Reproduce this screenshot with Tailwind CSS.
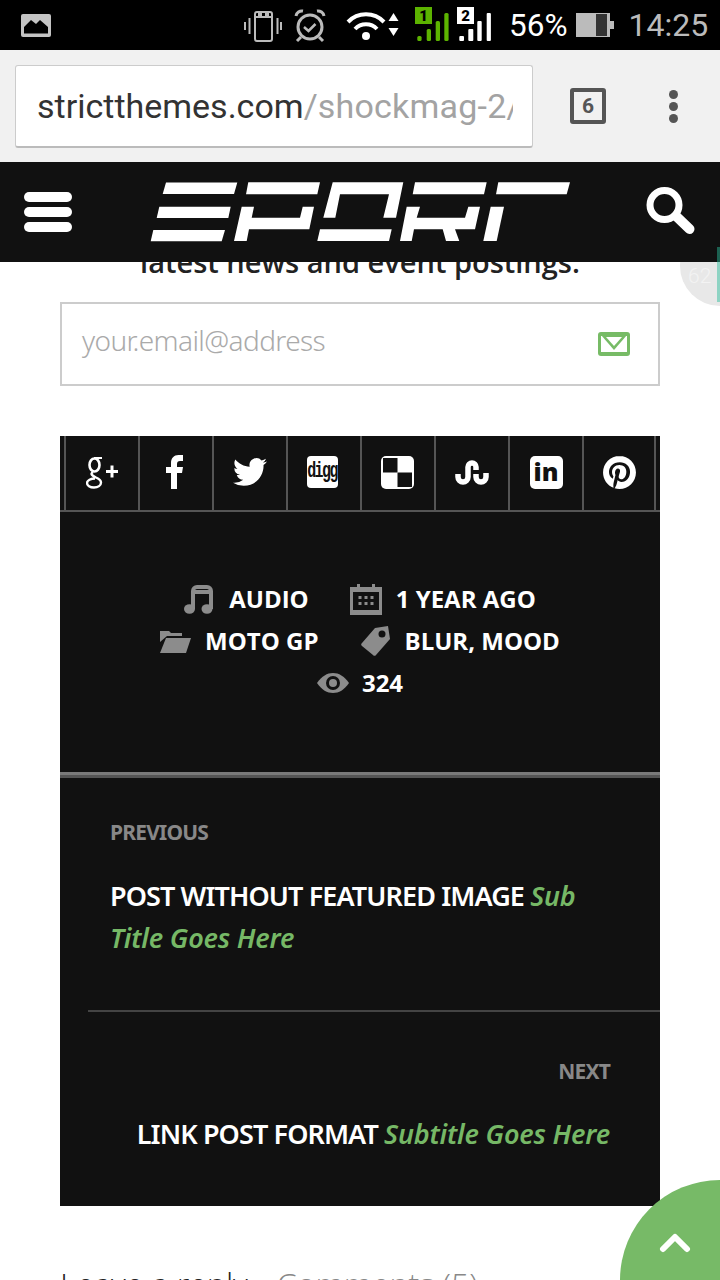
<!DOCTYPE html>
<html>
<head>
<meta charset="utf-8">
<script src="https://cdn.jsdelivr.net/npm/@tailwindcss/browser@4"></script>
</head>
<body>
<div class="relative w-[720px] h-[1280px] overflow-hidden bg-white font-['Roboto',sans-serif]">
  <!-- status bar -->
  <div class="relative flex items-center h-[50px] bg-black">
    <svg class="shrink-0" width="720" height="50" viewBox="0 0 720 50" aria-hidden="true">
      <path d="M23 14h26a2 2 0 0 1 2 2v19a2 2 0 0 1-2 2H23a2 2 0 0 1-2-2V16a2 2 0 0 1 2-2z" fill="#c4c4c4"/>
      <path d="M24 32v-5l7-7 5 4 4-4 8 7v5z" fill="#000"/><rect x="24" y="31" width="24" height="2.5" fill="#000"/>
      <g fill="none" stroke="#bbb" stroke-width="2">
        <rect x="255" y="12" width="17" height="29" rx="2"/><path d="M255 17h17"/>
        <path d="M249.500 18v16M245 22v8M277.500 18v16M281 22v8"/>
      </g>
      <rect x="258" y="12" width="4" height="4" fill="#bbb"/><rect x="265" y="12" width="4" height="4" fill="#bbb"/>
      <g fill="none" stroke="#bbb" stroke-width="3">
        <circle cx="310" cy="27" r="12"/><path d="M304 27l4.500 4 7-7" stroke-width="2.500"/>
        <path d="M296 16a6 6 0 0 1 7-5M324 16a6 6 0 0 0-7-5M301 37l-4 4M319 37l4 4"/>
      </g>
      <g fill="none" stroke="#fff" stroke-width="4">
        <path d="M348 22a25 25 0 0 1 36 0"/><path d="M355 29a15 15 0 0 1 22 0"/>
      </g>
      <circle cx="366" cy="36" r="4" fill="#fff"/>
      <path d="M393.500 13l5 8h-10zM393.500 36l5-8h-10z" fill="#fff"/>
      <rect x="415" y="7" width="17" height="17" fill="#5cb300"/>
      <g fill="#5cb300"><rect x="417.300" y="36" width="4.300" height="5" rx="1.500"/><rect x="426.700" y="29" width="4.300" height="12" rx="1.500"/><rect x="435.700" y="21" width="4.300" height="20" rx="1.500"/><rect x="444.300" y="13" width="4.300" height="28" rx="1.500"/></g>
      <rect x="457" y="7" width="17" height="17" fill="#fff"/>
      <g fill="#fff"><rect x="459.300" y="36" width="4.700" height="5" rx="1"/><rect x="468.300" y="29" width="5" height="12" rx="1"/><rect x="477.300" y="21" width="4.400" height="20" rx="1"/><rect x="486.700" y="13" width="4.200" height="28" rx="1"/></g>
      <rect x="576" y="13" width="34" height="24" fill="#bbb"/><rect x="610" y="21" width="4" height="8" fill="#bbb"/>
      <rect x="596" y="14" width="11" height="22" fill="#333"/>
      <text x="423.500" y="21" text-anchor="middle" font-family="Roboto" font-weight="900" font-size="15" fill="#000">1</text>
      <text x="465.500" y="21" text-anchor="middle" font-family="Roboto" font-weight="900" font-size="15" fill="#000">2</text>
      <text x="509" y="36" font-family="Roboto" font-size="31.500" fill="#fff">56%</text>
      <text x="628.500" y="36" font-family="Roboto" font-size="32" fill="#bbb">14:25</text>
    </svg>
  </div>
  <!-- browser chrome -->
  <div class="flex items-center h-[112px] bg-[#f1f1f1] pl-[15px]">
    <div class="flex items-center w-[518px] h-[83px] rounded-[3px] bg-white border border-[#ccc] border-b-2 border-b-[#bbb] pl-[21px] pr-[19px]">
      <div class="overflow-hidden whitespace-nowrap text-[34px] leading-[42px] mt-[1px] text-[#333]">strictthemes.com<span class="text-[#a3a3a3] tracking-[0.2px]">/shockmag-2/format</span></div>
    </div>
    <div class="ml-[37px] flex items-center justify-center w-[36px] h-[36px] border-[4px] border-[#555] rounded-[3px] text-[21px] leading-none font-bold text-[#555]">6</div>
    <div class="ml-[63px] flex flex-col gap-[3px]">
      <span class="w-[9px] h-[9px] rounded-full bg-[#555]"></span>
      <span class="w-[9px] h-[9px] rounded-full bg-[#555]"></span>
      <span class="w-[9px] h-[9px] rounded-full bg-[#555]"></span>
    </div>
  </div>
  <!-- site header -->
  <header class="relative z-10 flex items-center h-[100px] bg-[#111] pl-[24px]">
    <div class="flex flex-col gap-[5px]">
      <span class="w-[48px] h-[10px] rounded-full bg-white"></span>
      <span class="w-[48px] h-[10px] rounded-full bg-white"></span>
      <span class="w-[48px] h-[10px] rounded-full bg-white"></span>
    </div>
    <svg class="ml-[78px] shrink-0" width="420" height="60" viewBox="150 182 420 60" role="img" aria-label="EPORT">
      <g fill="#fff">
        <polygon points="166,182.500 237.300,182.500 234,194 162.700,194"/>
        <polygon points="159.300,206.700 230.700,206.700 228.300,218 156.700,218"/>
        <polygon points="153.300,230 225,230 221.700,241.300 150.700,241.300"/>
        <polygon points="248.300,182.300 320,182.300 317.300,194.300 246,194.300"/>
        <polygon points="241.700,206.700 254,206.700 251.700,217.700 300,217.700 302.700,206.700 314,206.700 309.300,229.300 249,229.300 246.700,241 234,241"/>
        <polygon points="332.700,182.300 403.300,182.300 396,217.700 383.300,217.700 389,194.300 340,194.300 335.300,217.700 323.300,217.700"/>
        <polygon points="320,229.300 391.700,229.300 389,241 317.300,241"/>
        <polygon points="415,182.300 486.700,182.300 484,194.300 412.700,194.300"/>
        <polygon points="406.700,206.700 420,206.700 416.700,217.700 465,217.700 468.300,206.700 480,206.700 475,229.300 455,229.300 459.300,241 446,241 442.700,229.300 414,229.300 411.700,241 400,241"/>
        <polygon points="498.300,182.300 570,182.300 566.700,194.300 496,194.300"/>
        <polygon points="490.700,206.700 504,206.700 496.700,241 483.300,241"/>
      </g>
    </svg>
    <svg class="ml-[73px] shrink-0" width="52" height="52" viewBox="0 0 52 52" aria-hidden="true">
      <circle cx="21.500" cy="19" r="14.500" fill="none" stroke="#fff" stroke-width="7"/>
      <path d="M34 31l12.500 12" stroke="#fff" stroke-width="10" stroke-linecap="round"/>
    </svg>
  </header>
  <!-- page content -->
  <main class="relative h-[1018px] overflow-hidden">
    <div class="absolute left-[680px] top-[-36px] flex items-center w-[80px] h-[80px] rounded-full bg-[#e8e8e8] pl-[8px] pt-[22px] text-[21px] font-light text-[#f3f3f3]">62</div>
    <p class="-mt-[18px] text-center font-['Open_Sans',sans-serif] text-[29px] leading-[36px] font-semibold text-[#222]">latest news and event postings.</p>
    <div class="mt-[22px] mx-[60px] flex items-center justify-between h-[84px] border-2 border-[#ccc] pl-[20px] pr-[28px]">
      <span class="font-['Noto_Sans',sans-serif] font-light text-[28px] tracking-[-0.6px] text-[#aaa] -mt-[9px]">your.email@address</span>
      <svg width="32" height="24" viewBox="0 0 32 24" aria-hidden="true">
        <rect width="32" height="24" rx="3" fill="#77bb66"/>
        <rect x="3" y="4" width="26" height="16" fill="#fff"/>
        <path d="M3 3h26L16 18z" fill="#77bb66"/><path d="M8 5h16L16 14z" fill="#fff"/>
      </svg>
    </div>
    <!-- dark box -->
    <section class="mt-[50px] mx-[60px] h-[770px] bg-[#111] flex flex-col">
      <div class="flex h-[76px] pl-[4px] border-b-2 border-[#555]">
        <div class="flex items-center justify-center w-[74px] border-l-2 border-[#555] pb-[2px]">
          <svg width="32" height="33" viewBox="0 0 32 33" aria-hidden="true"><g fill="none" stroke="#fff"><ellipse cx="8.500" cy="9" rx="5" ry="6.500" stroke-width="2.600"/><path d="M8 2h8" stroke-width="2"/><path d="M7 16c-3 2-1 3.500 3 5.500 3.500 1.500 5 3 5 5 0 3-3 5-7 5s-7-2-7-4.500 4-4.500 8-4.500" stroke-width="2.400"/></g><path d="M20 15.500h12M26 9.500v12" stroke="#fff" stroke-width="3"/></svg>
        </div>
        <div class="flex items-center justify-center w-[74px] border-l-2 border-[#555] pb-[2px] pr-[4px]">
          <svg width="17" height="34" viewBox="0 0 17 34" aria-hidden="true"><path d="M5 34V18H0v-6h5V8c0-5 3-8 7.500-8H17v6h-3c-2 0-3 1-3 3v3h6l-1 6h-5v16z" fill="#fff"/></svg>
        </div>
        <div class="flex items-center justify-center w-[74px] border-l-2 border-[#555] pb-[2px]">
          <svg width="34" height="30" viewBox="0 0 24 21" aria-hidden="true"><path transform="translate(0,-1.500)" d="M23.953 4.57a10 10 0 01-2.825.775 4.958 4.958 0 002.163-2.723c-.951.555-2.005.959-3.127 1.184a4.92 4.92 0 00-8.384 4.482C7.69 8.095 4.067 6.13 1.64 3.162a4.822 4.822 0 00-.666 2.475c0 1.71.87 3.213 2.188 4.096a4.904 4.904 0 01-2.228-.616v.06a4.923 4.923 0 003.946 4.827 4.996 4.996 0 01-2.212.085 4.936 4.936 0 004.604 3.417 9.867 9.867 0 01-6.102 2.105c-.39 0-.779-.023-1.17-.067a13.995 13.995 0 007.557 2.209c9.053 0 13.998-7.496 13.998-13.985 0-.21 0-.42-.015-.63A9.935 9.935 0 0024 4.59z" fill="#fff"/></svg>
        </div>
        <div class="flex items-center justify-center w-[74px] border-l-2 border-[#555] pb-[2px] pr-[4px]">
          <div class="flex items-center justify-center w-[31px] h-[32px] rounded-[4px] bg-white text-[#111] font-['Liberation_Mono',monospace] font-bold text-[15px] tracking-[-1.6px] leading-none"><span class="scale-y-[1.5] -mt-[2px]">digg</span></div>
        </div>
        <div class="flex items-center justify-center w-[74px] border-l-2 border-[#555] pb-[2px] pr-[2px]">
          <svg width="33" height="33" viewBox="0 0 33 33" aria-hidden="true"><rect width="33" height="33" rx="5" fill="#fff"/><rect x="2" y="2" width="14.500" height="14.500" fill="#111"/><rect x="16.500" y="16.500" width="14.500" height="14.500" fill="#111"/></svg>
        </div>
        <div class="flex items-center justify-center w-[74px] border-l-2 border-[#555] pb-[2px]">
          <svg width="34" height="25" viewBox="0 0 34 25" aria-hidden="true"><path d="M3 14v3a5 5 0 0 0 10 0V7a4 4 0 0 1 8 0v3M21 14v3a5 5 0 0 0 10 0v-4" fill="none" stroke="#fff" stroke-width="5.500"/></svg>
        </div>
        <div class="flex items-center justify-center w-[74px] border-l-2 border-[#555] pb-[2px]">
          <div class="flex items-center justify-center w-[33px] h-[33px] rounded-[5px] bg-white text-[#111] font-['Open_Sans',sans-serif] font-extrabold text-[25px] leading-none pb-[2px]">in</div>
        </div>
        <div class="flex items-center justify-center w-[74px] border-x-2 border-[#555] pb-[2px]">
          <svg width="33" height="33" viewBox="0 0 24 24" aria-hidden="true"><path d="M12.017 0C5.396 0 .029 5.367.029 11.987c0 5.079 3.158 9.417 7.618 11.162-.105-.949-.199-2.403.041-3.439.219-.937 1.406-5.957 1.406-5.957s-.359-.72-.359-1.781c0-1.663.967-2.911 2.168-2.911 1.024 0 1.518.769 1.518 1.688 0 1.029-.653 2.567-.992 3.992-.285 1.193.6 2.165 1.775 2.165 2.128 0 3.768-2.245 3.768-5.487 0-2.861-2.063-4.869-5.008-4.869-3.41 0-5.409 2.562-5.409 5.199 0 1.033.394 2.143.889 2.741.099.12.112.225.085.345-.09.375-.293 1.199-.334 1.363-.053.225-.172.271-.401.165-1.495-.69-2.433-2.878-2.433-4.646 0-3.776 2.748-7.252 7.92-7.252 4.158 0 7.392 2.967 7.392 6.923 0 4.135-2.607 7.462-6.233 7.462-1.214 0-2.354-.629-2.758-1.379l-.749 2.848c-.269 1.045-1.004 2.352-1.498 3.146 1.123.345 2.306.535 3.55.535 6.607 0 11.985-5.365 11.985-11.987C23.97 5.39 18.592.026 11.985.026L12.017 0z" fill="#fff"/></svg>
        </div>
      </div>
      <!-- meta -->
      <div class="pt-[66px] flex flex-col items-center font-['Open_Sans',sans-serif] font-bold text-[24px] leading-[42px] text-white">
        <div class="flex items-center h-[42px]">
          <svg width="29" height="29" viewBox="0 0 29 29" aria-hidden="true"><path d="M9 24V6a4 4 0 0 1 4-4h10a4 4 0 0 1 4 4v18" fill="none" stroke="#8c8c8c" stroke-width="4"/><path d="M9 7h18" stroke="#8c8c8c" stroke-width="4"/><ellipse cx="5.500" cy="24" rx="5.500" ry="4.800" fill="#8c8c8c"/><ellipse cx="23" cy="24" rx="5.500" ry="4.800" fill="#8c8c8c"/></svg>
          <span class="ml-[16px]">AUDIO</span>
          <svg class="ml-[41px]" width="32" height="31" viewBox="0 0 32 31" aria-hidden="true"><path d="M0 3h7V0h3v3h12V0h3v3h7v28H0z" fill="#8c8c8c"/><rect x="3" y="8" width="26" height="18" fill="#111"/><g fill="#8c8c8c"><rect x="8.500" y="12" width="3" height="3"/><rect x="14.500" y="12" width="3" height="3"/><rect x="20.500" y="12" width="3" height="3"/><rect x="8.500" y="18" width="3" height="3"/><rect x="14.500" y="18" width="3" height="3"/><rect x="20.500" y="18" width="3" height="3"/></g></svg>
          <span class="ml-[14px]">1 YEAR AGO</span>
        </div>
        <div class="flex items-center h-[42px]">
          <svg width="31" height="24" viewBox="0 0 31 24" aria-hidden="true"><path d="M0 13V2h9l2 2h11v3H7z" fill="#8c8c8c"/><path d="M6 9h25l-5 15H0z" fill="#8c8c8c"/></svg>
          <span class="ml-[14px]">MOTO GP</span>
          <svg class="ml-[42px]" width="29" height="30" viewBox="0 0 29 30" aria-hidden="true"><path d="M14 2L27 0l2 13-14 16a2 2 0 0 1-3 0L1 20a2 2 0 0 1 0-3z" fill="#8c8c8c"/><circle cx="21" cy="8" r="3.500" fill="#111"/></svg>
          <span class="ml-[15px]">BLUR, MOOD</span>
        </div>
        <div class="flex items-center h-[42px]">
          <svg width="32" height="20" viewBox="0 0 32 20" aria-hidden="true"><path d="M0 10C5 3 10 0 16 0s11 3 16 10c-5 7-10 10-16 10S5 17 0 10z" fill="#8c8c8c"/><circle cx="16" cy="10" r="7" fill="#111"/><circle cx="16" cy="10" r="4" fill="#8c8c8c"/></svg>
          <span class="ml-[13px]">324</span>
        </div>
      </div>
      <div class="mt-[68px] h-[3px] bg-[#7a7a7a]"></div>
      <div class="h-[3px] bg-[#555]"></div>
      <!-- prev / next -->
      <div class="font-['Noto_Sans',sans-serif]">
        <div class="pl-[50px] pr-[40px] pt-[39px]">
          <div class="text-[21px] leading-[30px] font-bold tracking-[-0.8px] text-[#888]">PREVIOUS</div>
          <p class="mt-[28px] text-[27px] leading-[42px] font-semibold tracking-[-0.9px] text-white">POST WITHOUT FEATURED IMAGE <em class="text-[#76b866] tracking-[-0.2px]">Sub Title Goes Here</em></p>
        </div>
        <div class="ml-[28px] mt-[51px] h-[2px] bg-[#444]"></div>
        <div class="pr-[50px] pt-[44px] text-right">
          <div class="text-[21px] leading-[30px] font-bold tracking-[-0.8px] text-[#888]">NEXT</div>
          <p class="mt-[27px] text-[27px] leading-[42px] font-semibold tracking-[-0.9px] text-white">LINK POST FORMAT <em class="text-[#76b866] tracking-[-0.2px]">Subtitle Goes Here</em></p>
        </div>
      </div>
    </section>
    <div class="mt-[55px] ml-[60px] flex gap-[29px] font-['Open_Sans',sans-serif] font-light text-[32px] leading-[46px] whitespace-nowrap">
      <span class="text-[#222]">Leave a reply</span><span class="text-[#888]">Comments (5)</span>
    </div>
  </main>
  <!-- reading progress edge -->
  <div class="absolute left-[717px] top-[247px] w-[3px] h-[55px] bg-[#28bb98]/47 z-20"></div>
  <!-- back to top -->
  <div class="absolute left-[620px] top-[1180px] w-[200px] h-[200px] rounded-full bg-[#77ba67] z-20 pl-[39px] pt-[51px]">
    <svg width="32" height="22" viewBox="0 0 32 22" aria-hidden="true"><path d="M4 18L16 6l12 12" fill="none" stroke="#fff" stroke-width="6" stroke-linecap="round" stroke-linejoin="round"/></svg>
  </div>
</div>
</body>
</html>
